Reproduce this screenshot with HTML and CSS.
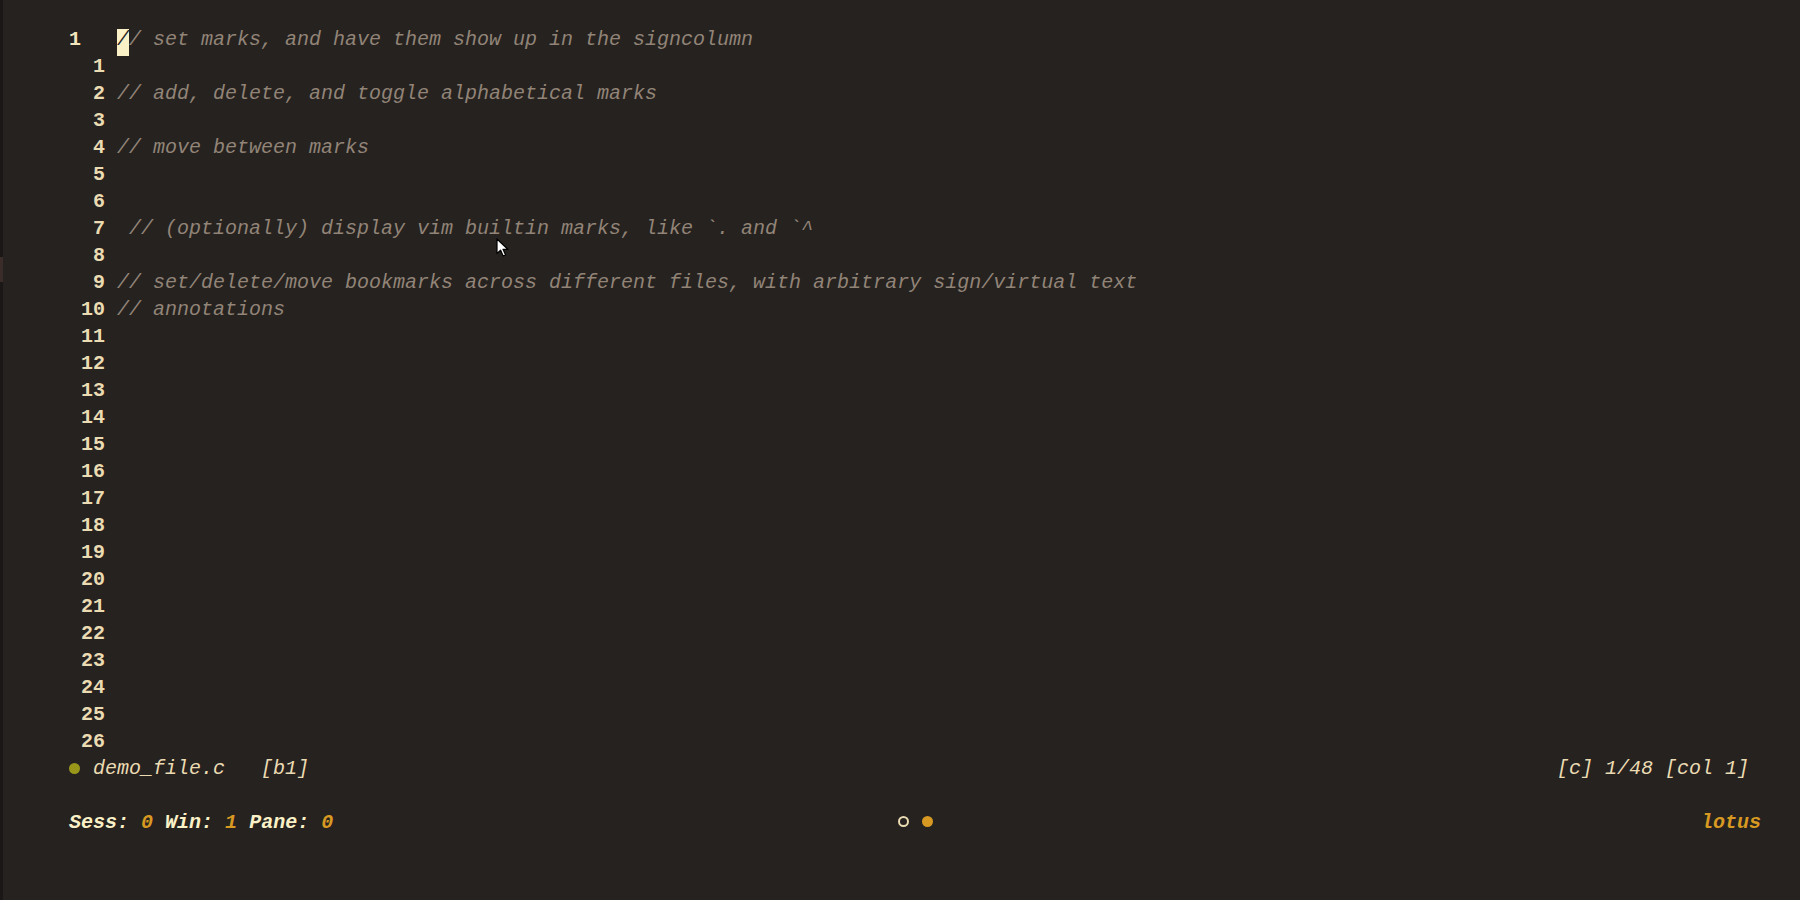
FILE: index.html
```html
<!DOCTYPE html>
<html lang="en">
<head>
<meta charset="utf-8">
<title>demo_file.c</title>
<link rel="stylesheet" href="styles.css">
</head>
<body>
<div class="edge"><div class="edge-mark"></div></div>
<main class="term">
  <div class="buffer">
    <div class="line current"><span class="nr">1</span><span class="code"><span class="cursor">/</span>/ set marks, and have them show up in the signcolumn</span></div>
    <div class="line"><span class="nr">1</span><span class="code"></span></div>
    <div class="line"><span class="nr">2</span><span class="code">// add, delete, and toggle alphabetical marks</span></div>
    <div class="line"><span class="nr">3</span><span class="code"></span></div>
    <div class="line"><span class="nr">4</span><span class="code">// move between marks</span></div>
    <div class="line"><span class="nr">5</span><span class="code"></span></div>
    <div class="line"><span class="nr">6</span><span class="code"></span></div>
    <div class="line"><span class="nr">7</span><span class="code"> // (optionally) display vim builtin marks, like `. and `^</span></div>
    <div class="line"><span class="nr">8</span><span class="code"></span></div>
    <div class="line"><span class="nr">9</span><span class="code">// set/delete/move bookmarks across different files, with arbitrary sign/virtual text</span></div>
    <div class="line"><span class="nr">10</span><span class="code">// annotations</span></div>
    <div class="line"><span class="nr">11</span><span class="code"></span></div>
    <div class="line"><span class="nr">12</span><span class="code"></span></div>
    <div class="line"><span class="nr">13</span><span class="code"></span></div>
    <div class="line"><span class="nr">14</span><span class="code"></span></div>
    <div class="line"><span class="nr">15</span><span class="code"></span></div>
    <div class="line"><span class="nr">16</span><span class="code"></span></div>
    <div class="line"><span class="nr">17</span><span class="code"></span></div>
    <div class="line"><span class="nr">18</span><span class="code"></span></div>
    <div class="line"><span class="nr">19</span><span class="code"></span></div>
    <div class="line"><span class="nr">20</span><span class="code"></span></div>
    <div class="line"><span class="nr">21</span><span class="code"></span></div>
    <div class="line"><span class="nr">22</span><span class="code"></span></div>
    <div class="line"><span class="nr">23</span><span class="code"></span></div>
    <div class="line"><span class="nr">24</span><span class="code"></span></div>
    <div class="line"><span class="nr">25</span><span class="code"></span></div>
    <div class="line"><span class="nr">26</span><span class="code"></span></div>
  </div>
  <div class="line statusline">
    <div class="st-left"><span class="mod-dot"></span><span class="fname">demo_file.c</span><span class="bufnr">[b1]</span></div>
    <div class="st-right">[c] 1/48 [col 1]</div>
  </div>
  <div class="line"></div>
  <div class="line tmux">
    <div class="tm-left"><span class="lbl">Sess:</span> <span class="val">0</span> <span class="lbl">Win:</span> <span class="val">1</span> <span class="lbl">Pane:</span> <span class="val">0</span></div>
    <div class="tm-center"><span class="ring"></span><span class="dot"></span></div>
    <div class="tm-right">lotus</div>
  </div>
</main>
<svg class="pointer" width="14" height="20" viewBox="0 0 14 20" aria-hidden="true">
  <path d="M1 1 L1 15.5 L4.6 12.2 L7.2 18 L9.6 17 L7 11.3 L11.8 11.3 Z" fill="#ffffff" stroke="#000000" stroke-width="1.2" stroke-linejoin="round"/>
</svg>
</body>
</html>
```

FILE: styles.css
```css
* { box-sizing: border-box; }

html, body {
  margin: 0;
  padding: 0;
  height: 100%;
}

body {
  background: #252220;
  display: flex;
  overflow: hidden;
  font-family: "Liberation Mono", "DejaVu Sans Mono", monospace;
  font-size: 20px;
  color: #ebdbb2;
}

.edge {
  width: 3px;
  flex: none;
  background: #1b1716;
  padding-top: 257px;
}

.edge-mark {
  height: 25px;
  background: #3a2c28;
}

.term {
  flex: 1;
  padding: 29px 0 0 66px;
}

.line {
  height: 27px;
  line-height: 21px;
  white-space: pre;
  display: flex;
}

.nr {
  width: 36px;
  margin-right: 12px;
  text-align: right;
  font-weight: bold;
  color: #ebdbb2;
  flex: none;
}

.current .nr {
  text-align: left;
  color: #f2e5bc;
}

.code {
  font-style: italic;
  color: #928477;
}

.cursor {
  display: inline-block;
  width: 12px;
  padding-bottom: 6px;
  background: #fbf1c7;
  color: #282828;
}

.statusline {
  width: 1680px;
  justify-content: space-between;
  font-style: italic;
  color: #ebdbb2;
}

.st-left {
  display: flex;
  align-items: flex-start;
}

.mod-dot {
  width: 11px;
  height: 11px;
  margin: 5px 13px 0 0;
  border-radius: 50%;
  background: #98971a;
}

.fname {
  margin-right: 36px;
}

.tmux {
  width: 1692px;
  display: grid;
  grid-template-columns: 1fr auto 1fr;
  font-style: italic;
  font-weight: bold;
}

.lbl { color: #fbf1c7; }
.val { color: #d79921; }

.tm-center {
  display: flex;
  gap: 13px;
  padding-top: 4px;
}

.ring {
  width: 11px;
  height: 11px;
  border: 2px solid #ebdbb2;
  border-radius: 50%;
}

.dot {
  width: 11px;
  height: 11px;
  border-radius: 50%;
  background: #d79921;
}

.tm-right {
  text-align: right;
  color: #d79921;
}

.pointer {
  position: absolute;
  left: 496px;
  top: 238px;
}
```
